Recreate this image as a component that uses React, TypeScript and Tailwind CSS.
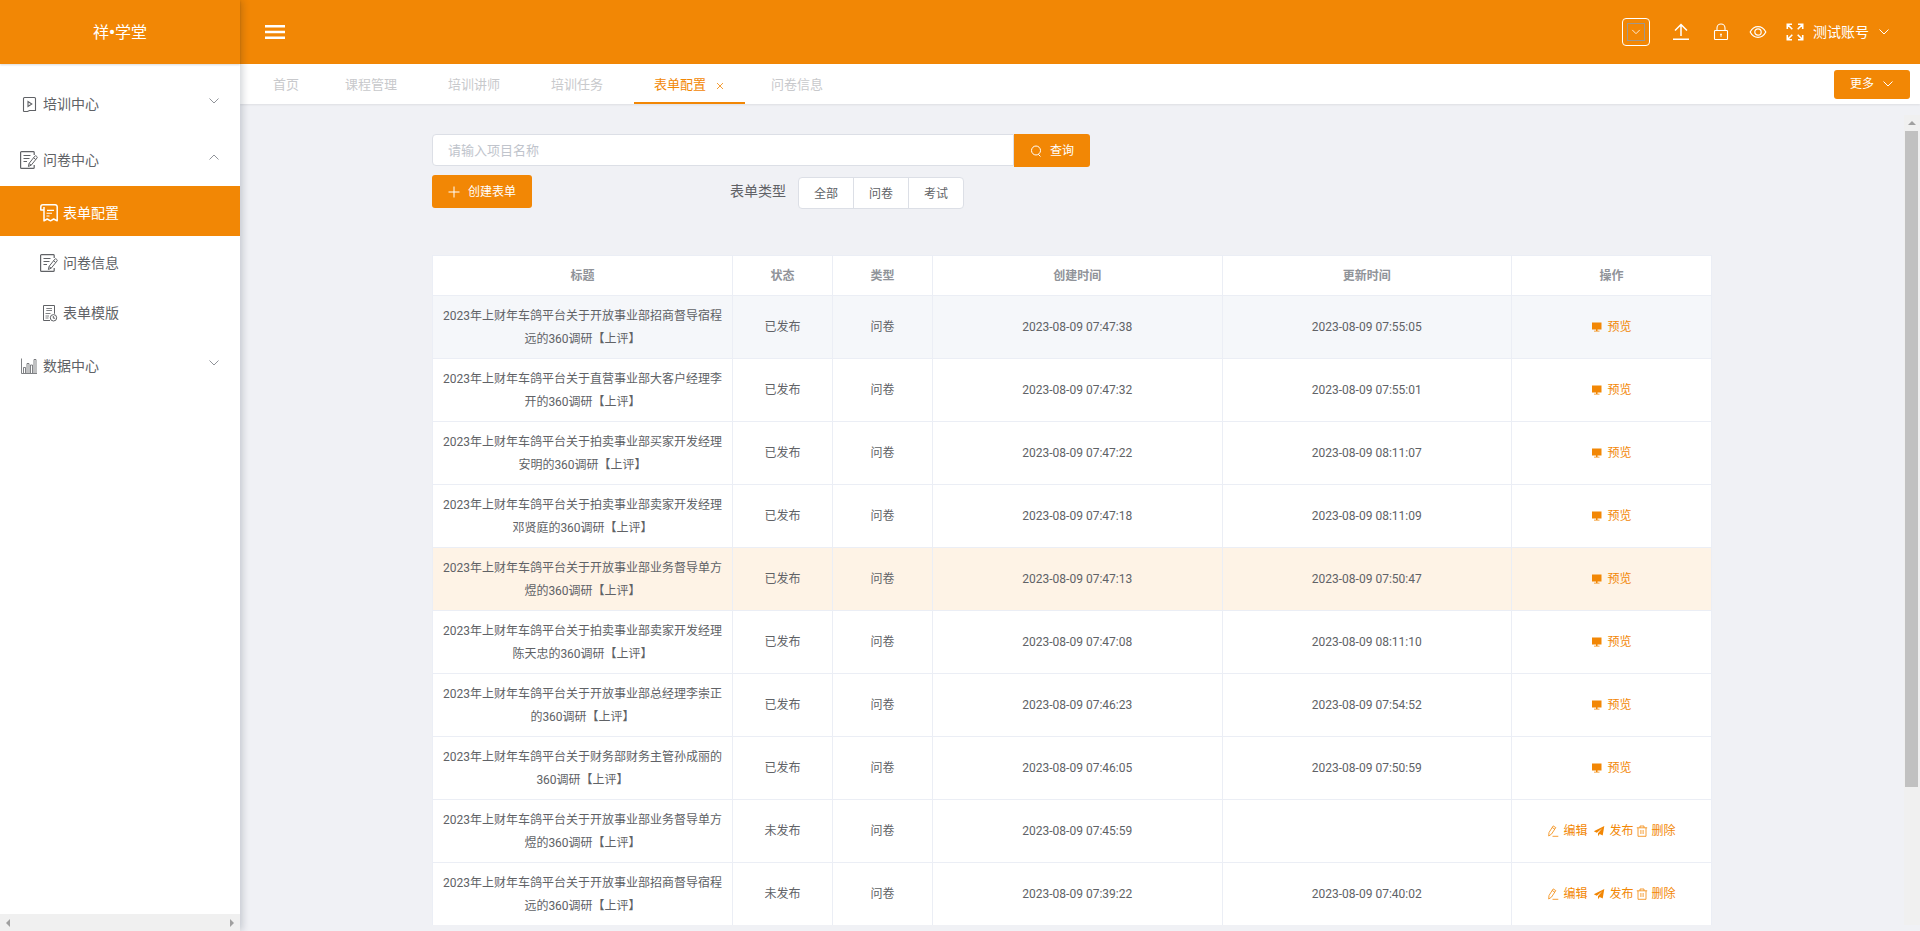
import React from 'react'

interface FormRow {
  title: string
  published: boolean
  created: string
  updated: string
  rowClass: string
}

const rows: FormRow[] = [
  { title: '2023年上财年车鸽平台关于开放事业部招商督导宿程远的360调研【上评】', published: true, created: '2023-08-09 07:47:38', updated: '2023-08-09 07:55:05', rowClass: 'bg-[#f5f7fa]' },
  { title: '2023年上财年车鸽平台关于直营事业部大客户经理李开的360调研【上评】', published: true, created: '2023-08-09 07:47:32', updated: '2023-08-09 07:55:01', rowClass: 'bg-white' },
  { title: '2023年上财年车鸽平台关于拍卖事业部买家开发经理安明的360调研【上评】', published: true, created: '2023-08-09 07:47:22', updated: '2023-08-09 08:11:07', rowClass: 'bg-white' },
  { title: '2023年上财年车鸽平台关于拍卖事业部卖家开发经理邓贤庭的360调研【上评】', published: true, created: '2023-08-09 07:47:18', updated: '2023-08-09 08:11:09', rowClass: 'bg-white' },
  { title: '2023年上财年车鸽平台关于开放事业部业务督导单方煜的360调研【上评】', published: true, created: '2023-08-09 07:47:13', updated: '2023-08-09 07:50:47', rowClass: 'bg-[#fef3e6]' },
  { title: '2023年上财年车鸽平台关于拍卖事业部卖家开发经理陈天忠的360调研【上评】', published: true, created: '2023-08-09 07:47:08', updated: '2023-08-09 08:11:10', rowClass: 'bg-white' },
  { title: '2023年上财年车鸽平台关于开放事业部总经理李崇正的360调研【上评】', published: true, created: '2023-08-09 07:46:23', updated: '2023-08-09 07:54:52', rowClass: 'bg-white' },
  { title: '2023年上财年车鸽平台关于财务部财务主管孙成丽的360调研【上评】', published: true, created: '2023-08-09 07:46:05', updated: '2023-08-09 07:50:59', rowClass: 'bg-white' },
  { title: '2023年上财年车鸽平台关于开放事业部业务督导单方煜的360调研【上评】', published: false, created: '2023-08-09 07:45:59', updated: '', rowClass: 'bg-white' },
  { title: '2023年上财年车鸽平台关于开放事业部招商督导宿程远的360调研【上评】', published: false, created: '2023-08-09 07:39:22', updated: '2023-08-09 07:40:02', rowClass: 'bg-white' },
]

const columns = ['标题', '状态', '类型', '创建时间', '更新时间', '操作']

const Chevron = ({ className, up = false }: { className: string; up?: boolean }) => (
  <svg viewBox="0 0 12 12" className={className} fill="none" stroke="currentColor" strokeWidth="1">
    <path d={up ? 'M1.5 8.5 6 4l4.5 4.5' : 'M1.5 3.5 6 8l4.5-4.5'} />
  </svg>
)

const VideoIcon = () => (
  <svg viewBox="0 0 18 18" className="h-[18px] w-[18px]" fill="none" stroke="currentColor" strokeWidth="1.1">
    <path d="M3.5 16.5v-13a1 1 0 0 1 1-1h10a1 1 0 0 1 1 1v12H9.500L7.500 16.500h-4" />
    <path d="M8 6.500v5l3.800-2.500z" />
  </svg>
)

const SurveyIcon = () => (
  <svg viewBox="0 0 18 18" className="h-[18px] w-[18px]" fill="none" stroke="currentColor" strokeWidth="1.2">
    <path d="M14.200 4V1.500a1 1 0 0 0-1-.9H1.600a1 1 0 0 0-1 1v14.800a1 1 0 0 0 1 1h11.600a1 1 0 0 0 1-1V14" />
    <path d="M3.500 4.500h7M3.500 7.500h6M3.500 10.500h3.500" />
    <path d="m9 12.500 5.800-7.300a1 1 0 0 1 1.400-.2l.7.600a1 1 0 0 1 .1 1.400L11.200 14.200 8.400 15.500zM13.600 6.800l2.200 1.800M9 12.500l2.200 1.700" strokeWidth="1" />
  </svg>
)

const FormIcon = () => (
  <svg viewBox="0 0 18 18" className="h-[18px] w-[18px]" fill="none" stroke="currentColor" strokeWidth="1.500" strokeLinejoin="round">
    <path d="M3.800 6H.8V3A2.200 2.200 0 0 1 3 .8h12.200a2 2 0 0 1 2 2v14l-3.500-1.800-3.200 1.800-3.300-1.800-3.200 1.800V3" />
    <path d="M7 6.400h7M6.500 9.200h5.500M6.500 12h3" strokeWidth="1.100" />
  </svg>
)

const TemplateIcon = () => (
  <svg viewBox="0 0 18 18" className="h-[18px] w-[18px]" fill="none" stroke="currentColor" strokeWidth="1">
    <path d="M10 16.500H3.500v-15h11v8.300" />
    <path d="M6.300 4.500h5.700M6.300 6.500h5.700M5.500 9.500h5M5.500 12h3.500M5.500 14h3" strokeWidth=".8" />
    <circle cx="13.500" cy="13.800" r="3.200" />
    <path d="M13.300 12v2.200h1.800" />
  </svg>
)

const ChartIcon = () => (
  <svg viewBox="0 0 18 18" className="h-[18px] w-[18px]" fill="none" stroke="currentColor" strokeWidth=".8">
    <path d="M1.500 1.500v15h15.500" />
    <path d="M3.500 16v-5.500h2V16M7 16V6.500h2V16M10.500 16V8h2v8M14 16V2.500h2V16" />
  </svg>
)

const ScreenIcon = () => (
  <svg viewBox="0 0 12 12" className="h-3 w-3" fill="currentColor">
    <path d="M1 1.500h9.500V8.500H1zM5 8.500h1.500v1.300H5zM3 9.700h5.500v.8H3z" />
  </svg>
)

const EditIcon = () => (
  <svg viewBox="0 0 12 12" className="h-3 w-3" fill="none" stroke="currentColor" strokeWidth=".8">
    <path d="M2 7.500 6.200.9l2.600 1.700-4.300 6.500L1.700 11zM5.200 2.500l2.600 1.700M5.500 11.300h5.800" />
  </svg>
)

const SendIcon = () => (
  <svg viewBox="0 0 12 12" className="h-3 w-3" fill="currentColor">
    <path d="M11.300 1 .8 6.300l3 1.500L9.300 3.200 5 8.300v3l1.700-2.200 3 1.500z" />
  </svg>
)

const TrashIcon = () => (
  <svg viewBox="0 0 12 12" className="h-3 w-3" fill="none" stroke="currentColor" strokeWidth=".8">
    <path d="M.8 2.800h10.400M2 2.800v8.500h8V2.800M4 2.800V1h4v1.800M4.900 5v4M7.100 5v4" />
  </svg>
)

const Action = ({ icon, label }: { icon: React.ReactNode; label: string }) => (
  <button type="button" className="flex items-center gap-1">
    {icon}
    <span>{label}</span>
  </button>
)

const MenuGroup = ({ icon, label, open = false }: { icon: React.ReactNode; label: string; open?: boolean }) => (
  <button type="button" className="flex h-14 w-full items-center gap-1 px-5 pt-1 text-left">
    {icon}
    <span className="flex-1 pl-px">{label}</span>
    <Chevron className="mb-[6px] h-3 w-3 text-[#909399]" up={open} />
  </button>
)

const MenuItem = ({ icon, label, active = false }: { icon: React.ReactNode; label: string; active?: boolean }) => (
  <a
    href="#"
    className={`flex h-[50px] items-center gap-1 pt-1 pl-10 ${active ? 'bg-[#f28705] text-white' : 'text-[#606266]'}`}
  >
    {icon}
    <span className="pl-px">{label}</span>
  </a>
)

const Sidebar = () => (
  <aside className="z-20 flex w-60 shrink-0 flex-col bg-white shadow-[2px_0_8px_rgba(0,21,41,0.2)]">
    <div className="flex h-16 shrink-0 items-center justify-center bg-[#f28705] pt-[2px] text-base text-white shadow-[0_1px_2px_rgba(0,0,0,0.15)]">
      祥<span className="font-black">•</span>学堂
    </div>
    <nav className="flex-1 pt-[10px] text-sm text-[#606266]">
      <MenuGroup icon={<VideoIcon />} label="培训中心" />
      <MenuGroup icon={<SurveyIcon />} label="问卷中心" open />
      <MenuItem icon={<FormIcon />} label="表单配置" active />
      <MenuItem icon={<SurveyIcon />} label="问卷信息" />
      <MenuItem icon={<TemplateIcon />} label="表单模版" />
      <MenuGroup icon={<ChartIcon />} label="数据中心" />
    </nav>
    <div className="flex h-[17px] items-center justify-between bg-[#f0f0f0] px-[6px] text-[#a0a0a0]">
      <svg viewBox="0 0 4 8" className="h-2 w-1" fill="currentColor">
        <path d="M4 0v8L0 4z" />
      </svg>
      <svg viewBox="0 0 4 8" className="h-2 w-1" fill="currentColor">
        <path d="M0 0v8l4-4z" />
      </svg>
    </div>
  </aside>
)

const Header = () => (
  <header className="flex h-16 shrink-0 items-center bg-[#f28705] pr-[30px] pl-[25px] text-white">
    <button type="button" aria-label="菜单" className="flex">
      <svg viewBox="0 0 20 16" className="h-4 w-5" fill="currentColor">
        <path d="M0 1h20v2.500H0zM0 6.700h20v2.500H0zM0 12.400h20v2.500H0z" />
      </svg>
    </button>
    <div className="ml-auto flex items-center">
      <button type="button" aria-label="选择" className="flex h-7 w-7 items-center justify-center rounded border border-white">
        <span className="flex h-[18px] w-[18px] items-center justify-center border border-[#a0978a]">
          <Chevron className="h-[10px] w-[10px]" />
        </span>
      </button>
      <button type="button" aria-label="上传" className="ml-[22px]">
        <svg viewBox="0 0 18 18" className="h-[18px] w-[18px]" fill="none" stroke="currentColor" strokeWidth="1.500">
          <path d="M1 16.300h16M9 13V2M3 7.500l6-6 6 6" />
        </svg>
      </button>
      <button type="button" aria-label="锁定" className="ml-[22px]">
        <svg viewBox="0 0 18 18" className="h-[18px] w-[18px]" fill="none" stroke="currentColor" strokeWidth="1.100">
          <rect x="2.500" y="7.500" width="13" height="9" rx=".8" />
          <path d="M5 7.500V5a4 4 0 0 1 8 0v2.500M9 11v2.800M8 11.300h2" />
        </svg>
      </button>
      <button type="button" aria-label="预览" className="ml-[19px]">
        <svg viewBox="0 0 18 18" className="h-[18px] w-[18px]" fill="none" stroke="currentColor" strokeWidth="1.200">
          <path d="M1.200 9C3 5.500 5.800 3.700 9 3.700s6 1.800 7.800 5.300c-1.800 3.500-4.600 5.300-7.800 5.300S3 12.500 1.200 9z" />
          <circle cx="9" cy="9" r="3.200" />
        </svg>
      </button>
      <button type="button" aria-label="全屏" className="ml-[19px]">
        <svg viewBox="0 0 18 18" className="h-[18px] w-[18px]" fill="none" stroke="currentColor" strokeWidth="1.600">
          <path d="M1.300 6V1.300H6M1.300 1.300l5 5M12 1.300h4.700V6M16.700 1.300l-5 5M1.300 12v4.700H6M1.300 16.700l5-5M12 16.700h4.700V12M16.700 16.700l-5-5" />
        </svg>
      </button>
      <button type="button" className="ml-[9px] flex items-center gap-[9px] text-sm">
        测试账号
        <Chevron className="h-3 w-3" />
      </button>
    </div>
  </header>
)

const Tab = ({ label }: { label: string }) => (
  <a href="#" className="flex h-full items-center pt-[2px] pr-[25px] pl-5">
    {label}
  </a>
)

const TabBar = () => (
  <div className="z-10 flex h-10 shrink-0 items-center bg-white pr-[10px] pl-[13px] shadow-[0_1px_2px_rgba(0,0,0,0.08)]">
    <nav className="flex h-full items-center gap-[6px] text-[13px] text-[#c8c9cc]">
      <a href="#" className="flex h-full items-center px-5 pt-[2px]">首页</a>
      <Tab label="课程管理" />
      <Tab label="培训讲师" />
      <Tab label="培训任务" />
      <div className="flex h-full items-center gap-[10px] border-b-2 border-[#f28705] px-5 pt-1 text-[#f28705]">
        <a href="#">表单配置</a>
        <button type="button" aria-label="关闭" className="pt-[2px] pr-px">
          <svg viewBox="0 0 8 8" className="h-2 w-2" fill="none" stroke="currentColor" strokeWidth=".8">
            <path d="m1 1 6 6M7 1 1 7" />
          </svg>
        </button>
      </div>
      <Tab label="问卷信息" />
    </nav>
    <button type="button" className="ml-auto flex h-[29px] items-center gap-2 rounded-[3px] bg-[#f28705] px-4 text-xs text-white">
      更多
      <Chevron className="h-3 w-3" />
    </button>
  </div>
)

const Filters = () => (
  <div>
    <form className="flex items-start">
      <input
        type="text"
        aria-label="项目名称"
        placeholder="请输入项目名称"
        className="h-8 w-[582px] rounded-l border border-[#dcdfe6] bg-white px-[15px] text-[13px] placeholder:text-[#c0c4cc]"
      />
      <button type="button" className="flex h-[33px] items-center gap-2 rounded-r-[3px] bg-[#f28705] px-4 text-xs text-white">
        <svg viewBox="0 0 12 12" className="h-3 w-3" fill="none" stroke="currentColor" strokeWidth="1">
          <circle cx="6" cy="5.500" r="4.500" />
          <path d="m8.300 9.300 2.200 2.200" />
        </svg>
        查询
      </button>
    </form>
    <div className="flex items-start pt-2">
      <button type="button" className="flex h-[33px] items-center gap-2 rounded-[3px] bg-[#f28705] px-4 text-xs text-white">
        <svg viewBox="0 0 12 12" className="h-3 w-3" fill="none" stroke="currentColor" strokeWidth="1">
          <path d="M6 .5v11M.5 6h11" />
        </svg>
        创建表单
      </button>
      <span className="ml-[198px] pt-[6px] text-sm text-[#606266]">表单类型</span>
      <div className="mt-[2px] ml-3 flex h-8 divide-x divide-[#dcdfe6] rounded border border-[#dcdfe6] bg-white text-xs text-[#606266]">
        <button type="button" className="px-[15px] pt-[2px]">全部</button>
        <button type="button" className="px-[15px] pt-[2px]">问卷</button>
        <button type="button" className="px-[15px] pt-[2px]">考试</button>
      </div>
    </div>
  </div>
)

const FormTable = () => (
  <table className="mt-[46px] w-full table-fixed border-collapse text-center text-xs leading-[23px] text-[#606266]">
    <colgroup>
      <col className="w-[300px]" />
      <col className="w-[100px]" />
      <col className="w-[100px]" />
      <col />
      <col />
      <col className="w-[200px]" />
    </colgroup>
    <thead>
      <tr className="bg-white text-[#909399]">
        {columns.map((name) => (
          <th key={name} className="h-10 border border-[#ebeef5] p-0 pt-[2px] font-bold">{name}</th>
        ))}
      </tr>
    </thead>
    <tbody>
      {rows.map((row) => (
        <tr key={row.created} className={row.rowClass}>
          <td className="border border-[#ebeef5] px-[9px] pt-[9px] pb-[7px]">{row.title}</td>
          <td className="border border-[#ebeef5]">{row.published ? '已发布' : '未发布'}</td>
          <td className="border border-[#ebeef5]">问卷</td>
          <td className="border border-[#ebeef5]">{row.created}</td>
          <td className="border border-[#ebeef5]">{row.updated}</td>
          <td className="border border-[#ebeef5] text-[#f28705]">
            {row.published ? (
              <div className="flex justify-center">
                <Action icon={<ScreenIcon />} label="预览" />
              </div>
            ) : (
              <div className="flex justify-center gap-[2px]">
                <Action icon={<EditIcon />} label="编辑" />
                <div className="flex gap-[2px] pl-1">
                  <Action icon={<SendIcon />} label="发布" />
                  <Action icon={<TrashIcon />} label="删除" />
                </div>
              </div>
            )}
          </td>
        </tr>
      ))}
    </tbody>
  </table>
)

const Scrollbar = () => (
  <div className="mt-[11px] flex w-4 shrink-0 flex-col bg-[#f0f0f0] pl-px">
    <svg viewBox="0 0 8 4" className="mx-[3px] my-[6px] h-1 w-2 text-[#a0a0a0]" fill="currentColor">
      <path d="M0 4h8L4 0z" />
    </svg>
    <div className="h-[81%] w-[13px] bg-[#c1c1c1]" />
  </div>
)

const App: React.FC = () => {
  return (
    <div className="flex h-screen overflow-hidden bg-[#f0f1f5] font-['Roboto','Noto_Sans_CJK_SC',sans-serif]">
      <Sidebar />
      <div className="flex min-w-0 flex-1 flex-col">
        <Header />
        <TabBar />
        <div className="flex min-h-0 flex-1 pb-[6px]">
          <main className="min-w-0 flex-1 overflow-hidden pt-[30px]">
            <div className="mx-auto max-w-[1280px]">
              <Filters />
              <FormTable />
            </div>
          </main>
          <Scrollbar />
        </div>
      </div>
    </div>
  )
}

export default App
